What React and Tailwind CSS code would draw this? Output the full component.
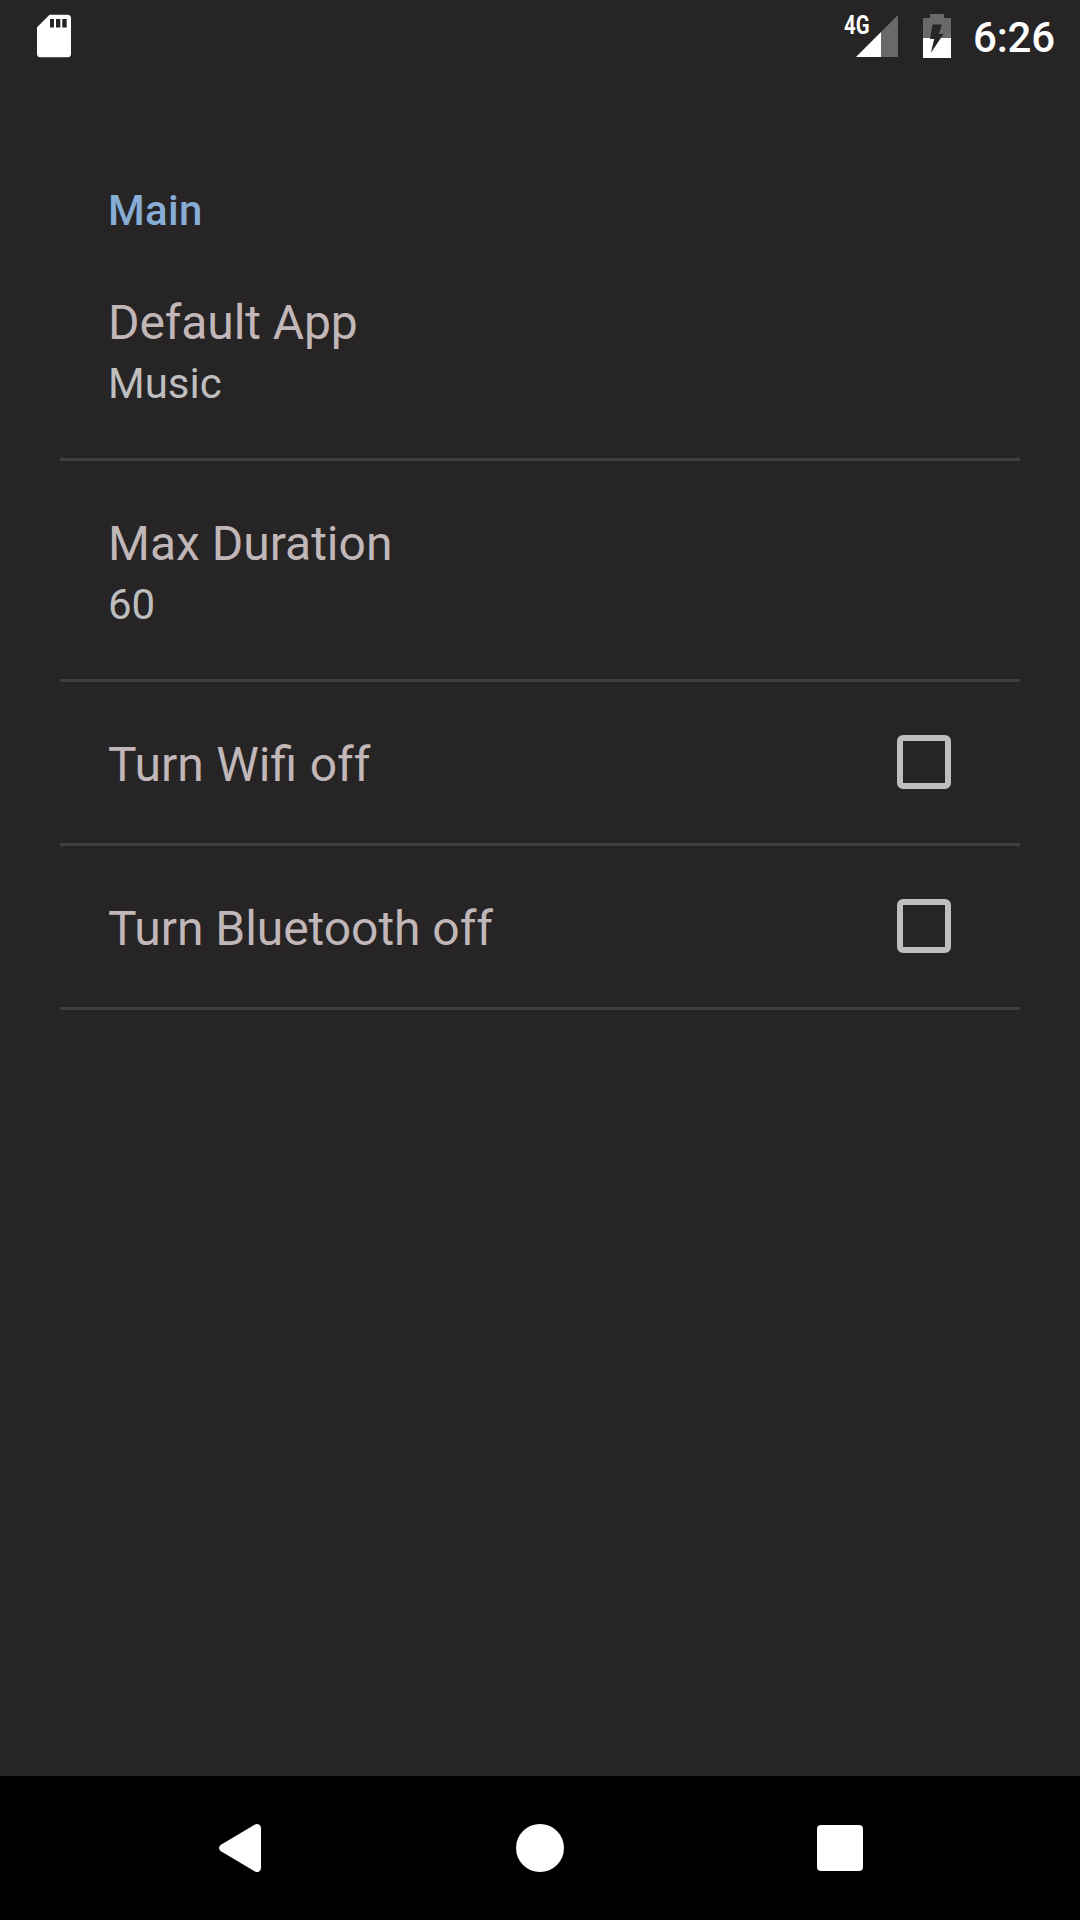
import React from "react";

function StatusBar() {
  return (
    <header className="flex h-[72px] shrink-0 justify-between pl-[36px] text-white">
      <svg className="mt-[14px] h-[44px] w-[36px]" viewBox="36 14 36 44" fill="currentColor" aria-label="SD card">
        <path
          fillRule="evenodd"
          d="M49.5 14.7H67.5Q71 14.7 71 18.2V53.8Q71 57.3 67.5 57.3H40.5Q37 57.3 37 53.8V27.2ZM50 19V27.5H54V19ZM56 19V27.5H60.3V19ZM62.3 19V27.5H66.7V19Z"
        />
      </svg>
      <div className="flex">
        <div className="flex">
          <span className="relative mt-[11px] h-[28px] w-[11px] whitespace-nowrap text-[26px] font-bold leading-[28px]">
            <span className="absolute left-0 top-0 origin-left scale-x-[0.78]">4G</span>
          </span>
          <svg className="mt-[14px] h-[44px] w-[44px]" viewBox="855 14 44 44">
            <path d="M881 57V32L898 15V57Z" fill="#6a6869" />
            <path d="M856 57L881 32V57Z" fill="#fff" />
          </svg>
        </div>
        <svg className="ml-[23px] mt-[14px] h-[44px] w-[30px]" viewBox="922 14 30 44">
          <path d="M923 18H930V14H944V18H951V38H923Z" fill="#6a6869" />
          <path d="M923 38H951V58H923Z" fill="#fff" />
          <path d="M932.5 24.5H942L938.8 34H943.5L930.8 53L934.2 39H930Z" fill="#262425" />
        </svg>
        <span className="ml-[21px] mt-[13px] w-[107px] text-[42px] font-medium leading-[50px] tracking-[-0.2px]">6:26</span>
      </div>
    </header>
  );
}

function Preference({ title, summary, checkbox, tracking = "" }) {
  return (
    <div className="flex justify-between border-b-[3px] border-[#3f3f3f] pl-[48px] pr-[69px] pt-[55px]">
      <div>
        <div className={`text-[48px] leading-[56px] text-[#c1b7b8] ${tracking}`}>{title}</div>
        {summary ? (
          <div className="mb-[49px] mt-[8px] text-[42px] leading-[50px] text-[#bebebe]">{summary}</div>
        ) : (
          <div className="h-[50px]" />
        )}
      </div>
      {checkbox && (
        <span role="checkbox" aria-checked="false" className="-mt-[2px] size-[54px] rounded-[6px] border-[6px] border-[#bebebe]" />
      )}
    </div>
  );
}

function NavigationBar() {
  return (
    <nav className="grid h-[144px] shrink-0 grid-cols-[300px_300px_300px] place-items-center justify-center bg-black text-white">
      <svg className="h-[50px] w-[44px]" viewBox="218 1823 44 50" fill="currentColor">
        <path d="M220.5 1845L255 1824.6Q257 1823.4 259 1824.6Q261 1825.8 261 1828V1868Q261 1870.2 259 1871.4Q257 1872.6 255 1871.4L220.5 1851Q219 1849.7 219 1848Q219 1846.3 220.5 1845Z" />
      </svg>
      <div className="size-[48px] rounded-full bg-white" />
      <div className="size-[46px] rounded-[4px] bg-white" />
    </nav>
  );
}

export default function App() {
  return (
    <div className="flex h-[1920px] w-[1080px] flex-col overflow-hidden bg-[#262425] font-['Roboto',sans-serif]">
      <StatusBar />
      <main className="flex-1 px-[60px] pt-[114px]">
        <h2 className="pl-[48px] text-[42px] font-medium leading-[50px] tracking-[0.3px] text-[#87add4]">Main</h2>
        <div className="mt-[4px]">
          <Preference title="Default App" summary="Music" tracking="tracking-[-0.1px]" />
          <Preference title="Max Duration" summary="60" />
          <Preference title="Turn Wifi off" checkbox tracking="[word-spacing:0.7px]" />
          <Preference title="Turn Bluetooth off" checkbox tracking="tracking-[-0.05px]" />
        </div>
      </main>
      <NavigationBar />
    </div>
  );
}
